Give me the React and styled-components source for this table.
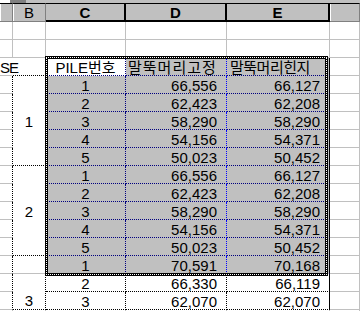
import React from "react";
import styled, { createGlobalStyle } from "styled-components";

const GlobalStyle = createGlobalStyle`
  body {
    margin: 0;
    background: #fff;
    font-family: "Liberation Sans", "Noto Sans CJK KR", sans-serif;
  }
`;

const GRID = "1px solid #c0c0c0";
const NAVY = "1px dotted #000080";
const BLUE = "1px dotted #0000ff";
const DOT = "1px dotted #000";

const rows = [
  { c: "1", d: "66,556", e: "66,127" },
  { c: "2", d: "62,423", e: "62,208" },
  { c: "3", d: "58,290", e: "58,290" },
  { c: "4", d: "54,156", e: "54,371" },
  { c: "5", d: "50,023", e: "50,452" },
  { c: "1", d: "66,556", e: "66,127" },
  { c: "2", d: "62,423", e: "62,208" },
  { c: "3", d: "58,290", e: "58,290" },
  { c: "4", d: "54,156", e: "54,371" },
  { c: "5", d: "50,023", e: "50,452" },
  { c: "1", d: "70,591", e: "70,168" },
  { c: "2", d: "66,330", e: "66,119" },
  { c: "3", d: "62,070", e: "62,070" },
];

// merged cells of column B, keyed by the data row where they start
const groups = {
  0: { span: 5, text: "1", v: "center", b: DOT },
  5: { span: 5, text: "2", v: "center", b: DOT },
  10: { span: 1, text: "", v: "flex-start", b: GRID },
  11: { span: 2, text: "3", v: "flex-end", b: DOT },
};

const FIRST_DATA_ROW = 6;

const Sheet = styled.div`
  display: grid;
  grid-template-columns: 13px 33px 80px 101px 103px 1fr;
  grid-template-rows: 3px 19px repeat(17, 18px);
  width: 360px;
  height: 311px;
  overflow: hidden;
  background: #fff;
  color: #000;
`;

const Strip = styled.div`
  grid-column: 1 / -1;
  grid-row: 1;
  display: flex;
`;

const StripPart = styled.div`
  width: ${(p) => p.$w || "auto"};
  flex: ${(p) => (p.$w ? "none" : 1)};
  background: ${(p) => p.$bg};
`;

const HeadCell = styled.div`
  grid-row: 2;
  grid-column: ${(p) => p.$col};
  box-sizing: border-box;
  background: #c0c0c0;
  border-top: 1px solid #000;
  border-right: ${(p) => (p.$sel ? "2px solid #000" : "1px solid #808080")};
  border-bottom: ${(p) => (p.$sel ? "2px solid #000" : "1px solid #808080")};
  box-shadow: ${(p) => (p.$sel ? "none" : "inset 1px 0 0 #fff")};
  font-size: 15px;
  font-weight: ${(p) => (p.$sel ? 700 : 400)};
  line-height: 16px;
  padding-top: 1px;
  text-align: center;
`;

const Cell = styled.div`
  box-sizing: border-box;
  grid-column: ${(p) => p.$col};
  grid-row: ${(p) => p.$row} / span ${(p) => p.$span || 1};
  display: flex;
  flex-direction: column;
  justify-content: ${(p) => p.$v || "flex-start"};
  background: ${(p) => p.$bg || "#fff"};
  border-right: ${(p) => p.$r || GRID};
  border-bottom: ${(p) => p.$b || GRID};
  padding: 1px ${(p) => (p.$align === "right" ? "9px" : "0")} 0
    ${(p) => p.$pl || "0"};
  text-align: ${(p) => p.$align || "left"};
  font-size: 15px;
  line-height: 17px;
  letter-spacing: ${(p) => p.$ls || "normal"};
  white-space: nowrap;
  min-width: 0;
`;

const Marquee = styled.div`
  grid-column: 3 / 6;
  grid-row: 5 / 17;
  margin: -2px 2px -2px -1px;
  border: 3px solid #000;
  position: relative;
  pointer-events: none;

  &::before {
    content: "";
    position: absolute;
    inset: -2px;
    border: 1px dotted #fff;
  }
`;

const EmptyRow = ({ row }) => (
  <>
    {[1, 2, 3, 4, 5, 6].map((col) => (
      <Cell key={col} $row={row} $col={col} />
    ))}
  </>
);

export default function App() {
  return (
    <>
      <GlobalStyle />
      <Sheet>
        <Strip>
          <StripPart $w="10px" $bg="#fff" />
          <StripPart $w="16px" $bg="#808080" />
          <StripPart $bg="#c0c0c0" />
        </Strip>

        <HeadCell $col={1} />
        <HeadCell $col={2}>B</HeadCell>
        <HeadCell $col={3} $sel>C</HeadCell>
        <HeadCell $col={4} $sel>D</HeadCell>
        <HeadCell $col={5} $sel>E</HeadCell>
        <HeadCell $col={6} />

        <EmptyRow row={3} />
        <EmptyRow row={4} />

        <Cell $row={5} $col={2} $b={DOT} />
        <Cell $row={5} $col={1} $r="1px solid #fff" $ls="-1px">
          SE
        </Cell>
        <Cell $row={5} $col={3} $align="center" $b={NAVY} $r={NAVY}>
          PILE번호
        </Cell>
        <Cell $row={5} $col={4} $pl="2px" $bg="#c0c0c0" $b={NAVY} $r={BLUE} $ls="1px">
          말뚝머리고정
        </Cell>
        <Cell $row={5} $col={5} $pl="3px" $bg="#c0c0c0" $b={NAVY} $r="1px solid #000" $ls="-0.5px">
          말뚝머리힌지
        </Cell>
        <Cell $row={5} $col={6} />

        {rows.map((row, i) => {
          const r = FIRST_DATA_ROW + i;
          const sel = i <= 10;
          const g = groups[i];
          const bg = sel ? "#c0c0c0" : "#fff";
          const bottom = sel ? NAVY : DOT;
          return (
            <React.Fragment key={i}>
              <Cell $row={r} $col={1} $r={DOT} />
              {g && (
                <Cell
                  $row={r}
                  $col={2}
                  $span={g.span}
                  $v={g.v}
                  $b={g.b}
                  $r={DOT}
                  $align="center"
                >
                  {g.text}
                </Cell>
              )}
              <Cell $row={r} $col={3} $align="center" $bg={bg} $b={bottom} $r={sel ? NAVY : DOT}>
                {row.c}
              </Cell>
              <Cell $row={r} $col={4} $align="right" $bg={bg} $b={bottom} $r={sel ? BLUE : DOT}>
                {row.d}
              </Cell>
              <Cell $row={r} $col={5} $align="right" $bg={bg} $b={bottom} $r="1px solid #000">
                {row.e}
              </Cell>
              <Cell $row={r} $col={6} />
            </React.Fragment>
          );
        })}

        <EmptyRow row={FIRST_DATA_ROW + rows.length} />

        <Marquee />
      </Sheet>
    </>
  );
}
